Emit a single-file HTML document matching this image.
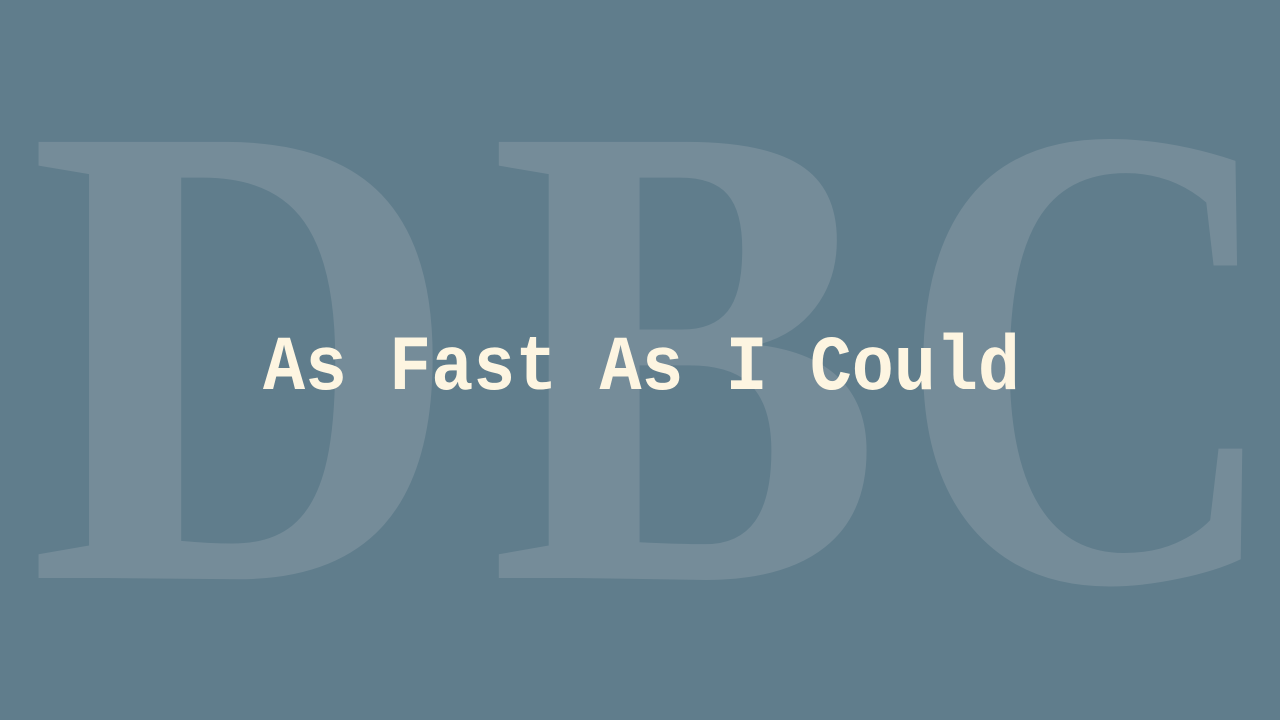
<!DOCTYPE html>
<html><head><style>
html,body{margin:0;padding:0;background:#607d8c;width:1280px;height:720px;overflow:hidden}
</style></head><body>
<svg width="1280" height="720" xmlns="http://www.w3.org/2000/svg">
<rect width="1280" height="720" fill="#607d8c"/>
<g font-family="Liberation Serif, serif" font-weight="bold" font-size="666" fill="#758c99">
<text x="28" y="578" textLength="434" lengthAdjust="spacingAndGlyphs">D</text>
<text x="489" y="578" textLength="394" lengthAdjust="spacingAndGlyphs">B</text>
<text x="897" y="580" textLength="386" lengthAdjust="spacingAndGlyphs">C</text>
</g>
<text x="263" y="389" font-family="Liberation Mono, monospace" font-weight="bold" font-size="78" fill="#fdf5e1" textLength="757" lengthAdjust="spacingAndGlyphs">As Fast As I Could</text>
</svg>
</body></html>
